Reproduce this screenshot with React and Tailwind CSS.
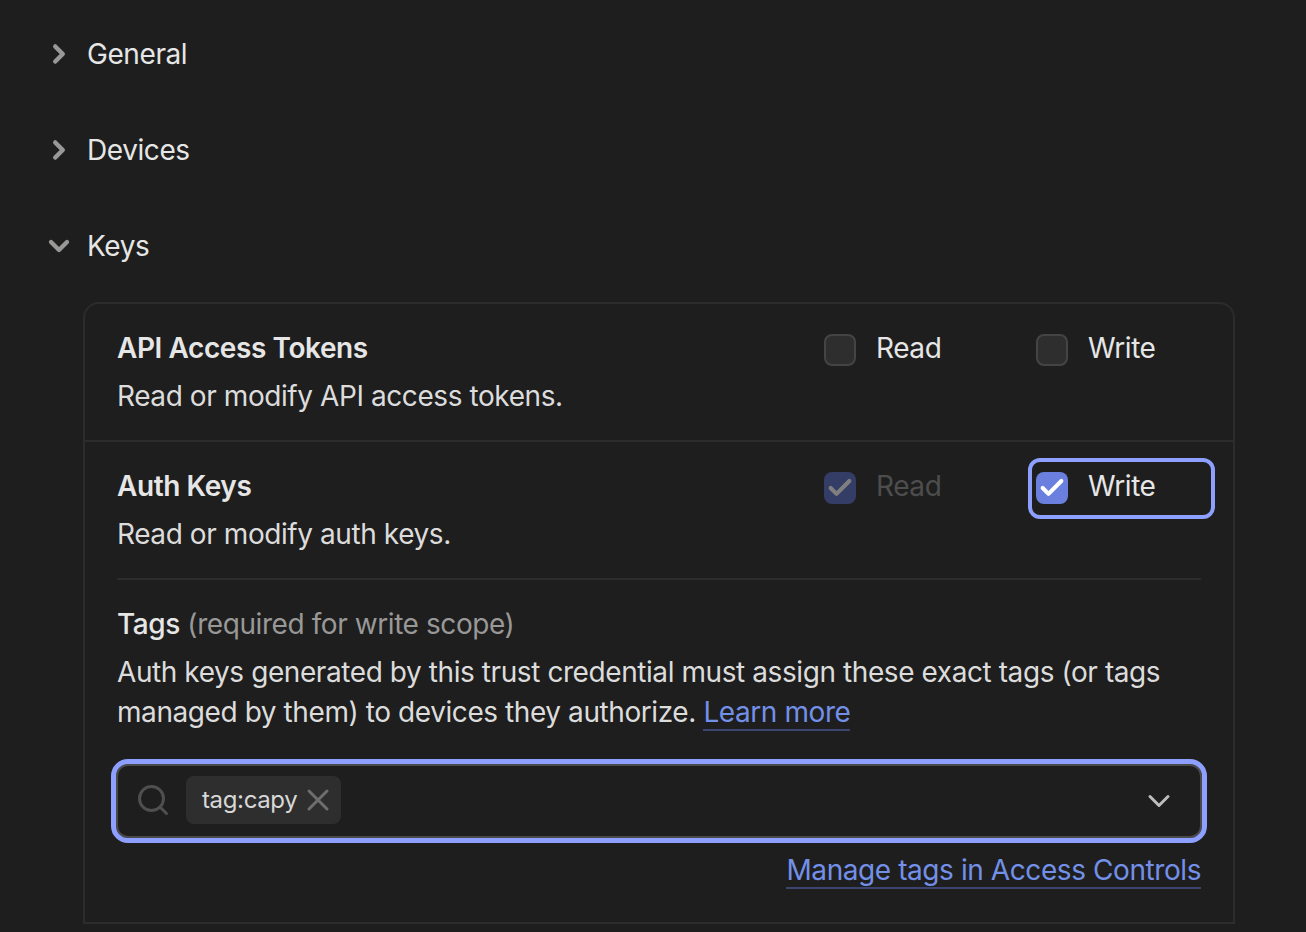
import { ChevronDown, ChevronRight, Check, Search, X } from 'lucide-react';

function Section({ label, open }) {
    return (
        <div className="flex items-center h-10 mb-14">
            <div className="w-[87px] h-10 flex items-center justify-center pl-[31px] shrink-0 text-[#999897]">
                {open ? <ChevronDown size={32} strokeWidth={3.2} className="shrink-0" /> : <ChevronRight size={30} strokeWidth={3.6} className="shrink-0" />}
            </div>
            <span className="text-[#e6e6e6]">{label}</span>
        </div>
    );
}

function Box({ checked, disabled }) {
    if (!checked) {
        return <div className="w-8 h-8 rounded-lg border-2 border-[#444444] bg-[#2e2e2e] shrink-0" />;
    }
    return (
        <div className={`w-8 h-8 rounded-lg flex items-center justify-center shrink-0 ${disabled ? 'bg-[#343d66]' : 'bg-[#6b80de]'}`}>
            <Check size={28} strokeWidth={3.5} className={disabled ? 'text-[#7f7f7f]' : 'text-white'} />
        </div>
    );
}

function Perm({ label, checked, disabled, focused }) {
    return (
        <div className={`relative flex items-center gap-5 h-10 ${disabled ? 'text-[#4d4d4d]' : 'text-[#e6e6e6]'}`}>
            {focused && <div className="absolute -left-2 -top-2 -bottom-[13px] -right-[59px] rounded-xl border-4 border-[#8d9fff]" />}
            <div className="translate-y-0.5"><Box checked={checked} disabled={disabled} /></div>
            <span>{label}</span>
        </div>
    );
}

function Perms({ children }) {
    return <div className="flex w-[409px] shrink-0 [&>*:first-child]:w-[212px]">{children}</div>;
}

export default function App() {
    return (
        <div className="h-[932px] overflow-hidden bg-[#1e1e1e] text-[28px] leading-10 tracking-[-0.42px] text-[#e6e6e6] pt-[34px] font-['Inter',sans-serif]">
            <Section label="General" />
            <Section label="Devices" />
            <Section label="Keys" open />

            <div className="ml-[83px] w-[1152px] -mt-5 rounded-t-2xl border-2 border-b-0 border-[#2c2c2c]">
                {/* API tokens */}
                <div className="flex justify-between pl-8 pt-6 pb-6 border-b-2 border-[#2c2c2c]">
                    <div>
                        <div className="font-semibold">API Access Tokens</div>
                        <div className="mt-2 text-[#dcdcdc]">Read or modify API access tokens.</div>
                    </div>
                    <Perms>
                        <Perm label="Read" />
                        <Perm label="Write" />
                    </Perms>
                </div>

                {/* Auth keys */}
                <div className="pl-8 pr-8 pt-6 pb-8 border-b-2 border-[#2c2c2c]">
                    <div className="flex justify-between -mr-8 pb-6">
                        <div>
                            <div className="font-semibold">Auth Keys</div>
                            <div className="mt-2 text-[#dcdcdc]">Read or modify auth keys.</div>
                        </div>
                        <Perms>
                            <Perm label="Read" checked disabled />
                            <Perm label="Write" checked focused />
                        </Perms>
                    </div>
                    <div className="border-t-2 border-[#2c2c2c] pt-6">
                        <div>
                            <span className="font-medium">Tags</span>{' '}
                            <span className="text-[#999897]">(required for write scope)</span>
                        </div>
                        <p className="mt-2 text-[#dcdcdc]">
                            Auth keys generated by this trust credential must assign these exact tags (or tags
                            managed by them) to devices they authorize.{' '}
                            <a className="text-[#7390e8] border-b-2 border-[#3b4570]">Learn more</a>
                        </p>
                        <div className="-mx-px mt-8 h-[74px] rounded-xl border-2 border-[#4a4a4a] outline-[5px] outline-[#8d9fff] flex items-center pl-[17px] pr-[23px]">
                            <Search size={36} strokeWidth={2} className="mb-0.5 text-[#4f4f4f] shrink-0" />
                            <div className="ml-[15px] mb-0.5 h-12 rounded-lg bg-[#2e2e2e] flex items-center pl-4 pr-[5px] gap-[3px] text-2xl tracking-[-0.36px]">
                                <span className="text-[#d8d8d8]">tag:capy</span>
                                <X size={36} strokeWidth={2} className="text-[#6e6e6e]" />
                            </div>
                            <ChevronDown size={36} strokeWidth={2} className="ml-auto text-[#bdbdbd]" />
                        </div>
                        <div className="mt-3 text-right">
                            <a className="text-[#7390e8] border-b-2 border-[#3b4570]">Manage tags in Access Controls</a>
                        </div>
                    </div>
                </div>
            </div>
        </div>
    );
}
